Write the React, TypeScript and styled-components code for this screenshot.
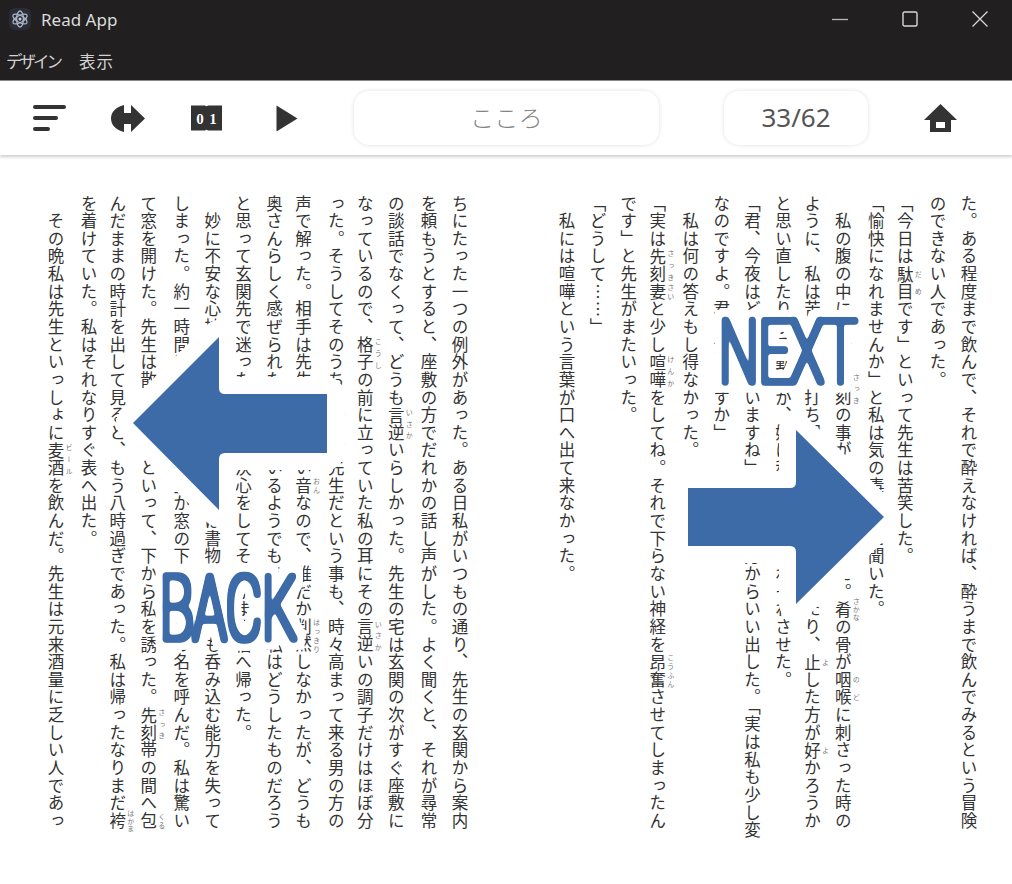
import React from "react";
import styled, { createGlobalStyle } from "styled-components";

const Global = createGlobalStyle`
  html, body { margin: 0; padding: 0; background: #fff; }
  body { font-family: "Noto Sans", "Noto Sans CJK JP", sans-serif; overflow: hidden; }
`;

const Shell = styled.div`
  position: relative;
  width: 1012px;
  height: 884px;
  overflow: hidden;
  background: #fff;
`;
const TitleBar = styled.header`
  height: 40px;
  background: #211f1f;
  display: flex;
  align-items: center;
  justify-content: space-between;
  padding: 0 24px 2px 9px;
  box-sizing: border-box;
`;
const Brand = styled.div`
  display: flex;
  align-items: center;
  gap: 10px;
  color: #dcdcdc;
  font: 400 17px "Noto Sans", sans-serif;
`;
const WindowControls = styled.div`
  display: flex;
  align-items: center;
  gap: 54px;
`;
const MenuBar = styled.nav`
  height: 41px;
  background: #211f1f;
  display: flex;
  align-items: center;
  gap: 19px;
  padding: 2px 0 0 6px;
  box-sizing: border-box;
  border-bottom: 1px solid #8a8a8a;
  color: #d2d2d2;
  font: 400 16.5px "Noto Sans CJK JP", sans-serif;
`;
const MenuItem = styled.span<{ $tracking: number }>`
  letter-spacing: ${(p) => p.$tracking}px;
`;
const Toolbar = styled.div`
  height: 74px;
  background: #fff;
  display: flex;
  align-items: center;
  padding-left: 10px;
  box-sizing: border-box;
  box-shadow: 0 2px 3px rgba(0, 0, 0, 0.2);
  position: relative;
`;
const ToolSlot = styled.div`
  width: 78.5px;
  height: 40px;
  display: flex;
  align-items: center;
  justify-content: center;
  flex: none;
`;
const Pill = styled.div<{ $w: number; $ml: number }>`
  width: ${(p) => p.$w}px;
  margin-left: ${(p) => p.$ml}px;
  height: 54px;
  flex: none;
  border-radius: 15px;
  background: #fff;
  box-shadow: 0 0 4px rgba(0, 0, 0, 0.13);
  display: flex;
  align-items: center;
  justify-content: center;
`;
const BookTitle = styled.span`
  color: #858585;
  font: 300 24px "Noto Sans CJK JP", sans-serif;
  letter-spacing: 0.4px;
  margin-top: -3px;
`;
const PageCount = styled.span`
  color: #555;
  font: 400 26px "Noto Sans", sans-serif;
  margin-top: -2px;
`;
const HomeSlot = styled(ToolSlot)`
  margin-left: 33px;
`;
const Reader = styled.main`
  display: flex;
  padding: 40px 0 0 42px;
  gap: 76px;
`;
const Page = styled.section`
  width: 433px;
  height: 660px;
  display: flex;
  flex-direction: row-reverse;
  justify-content: flex-start;
`;
const Column = styled.p`
  margin: 0;
  flex: none;
  width: 30.93px;
  height: 660px;
  writing-mode: vertical-rl;
  white-space: nowrap;
  font: 400 16.5px/31px "Noto Sans CJK JP", sans-serif;
  letter-spacing: 1.14px;
  color: #333;
  ruby-position: over;
  rt {
    font-size: 7px;
    letter-spacing: 0.6px;
    color: #777;
    line-height: 1;
  }
`;
const Overlay = styled.svg`
  position: absolute;
  left: 0;
  top: 0;
  pointer-events: none;
`;

const rightPage = [
  "た。ある程度まで飲んで、それで酔えなければ、酔うまで飲んでみるという冒険",
  "のできない人であった。",
  "「今日は{駄目|だめ}です」といって先生は苦笑した。",
  "「愉快になれませんか」と私は気の毒そうに聞いた。",
  "　私の腹の中には始終{先刻|さっき}の事が引ッ{懸|かか}っていた。{肴|さかな}の骨が{咽喉|のど}に刺さった時の",
  "ように、私は苦しんだ。打ち明けてみようかと考えたり、{止|よ}した方が{好|よ}かろうか",
  "と思い直したりする動揺が、妙に私の様子をそわそわさせた。",
  "「君、今夜はどうかしていますね」と先生の方からいい出した。「実は私も少し変",
  "なのですよ。君に分りますか」",
  "　私は何の答えもし得なかった。",
  "「実は{先刻|さっき}{妻|さい}と少し{喧嘩|けんか}をしてね。それで下らない神経を{昂奮|こうふん}させてしまったん",
  "です」と先生がまたいった。",
  "「どうして……」",
  "　私には喧嘩という言葉が口へ出て来なかった。",
];
const leftPage = [
  "ちにたった一つの例外があった。ある日私がいつもの通り、先生の玄関から案内",
  "を頼もうとすると、座敷の方でだれかの話し声がした。よく聞くと、それが尋常",
  "の談話でなくって、どうも{言逆|いさか}いらしかった。先生の宅は玄関の次がすぐ座敷に",
  "なっているので、{格子|こうし}の前に立っていた私の耳にその{言逆|いさか}いの調子だけはほぼ分",
  "った。そうしてそのうちの一人が先生だという事も、時々高まって来る男の方の",
  "声で解った。相手は先生よりも低い{音|おん}なので、誰だか{判然|はっきり}しなかったが、どうも",
  "奥さんらしく感ぜられた。泣いているようでもあった。私はどうしたものだろう",
  "と思って玄関先で迷ったが、すぐ決心をしてそのまま下宿へ帰った。",
  "　妙に不安な心持が私を襲って来た。私は書物を読んでも呑み込む能力を失って",
  "しまった。約一時間ばかりすると先生が窓の下へ来て私の名を呼んだ。私は驚い",
  "て窓を開けた。先生は散歩しようといって、下から私を誘った。{先刻|さっき}帯の間へ{包|くる}",
  "んだままの時計を出して見ると、もう八時過ぎであった。私は帰ったなりまだ{袴|はかま}",
  "を着けていた。私はそれなりすぐ表へ出た。",
  "　その晩私は先生といっしょに{麦酒|ビール}を飲んだ。先生は元来酒量に乏しい人であっ",
];

function renderLine(line: string) {
  return line.split(/(\{[^}]+\})/).map((part, i) => {
    if (part.startsWith("{")) {
      const [base, reading] = part.slice(1, -1).split("|");
      return (
        <ruby key={i}>
          {base}
          <rt>{reading}</rt>
        </ruby>
      );
    }
    return <React.Fragment key={i}>{part}</React.Fragment>;
  });
}

const ARROW = "#3c6ba8";

export default function App() {
  return (
    <Shell>
      <Global />
      <TitleBar>
        <Brand>
          <svg width="22" height="22" viewBox="0 0 22 22">
            <rect width="22" height="22" rx="6" fill="#2a2d38" />
            <g fill="none" stroke="#aab4c4" strokeWidth="1.3">
              <ellipse cx="11" cy="11" rx="8" ry="3.4" transform="rotate(30 11 11)" />
              <ellipse cx="11" cy="11" rx="8" ry="3.4" transform="rotate(90 11 11)" />
              <ellipse cx="11" cy="11" rx="8" ry="3.4" transform="rotate(150 11 11)" />
            </g>
            <circle cx="11" cy="11" r="1.5" fill="#c8d0dc" />
          </svg>
          Read App
        </Brand>
        <WindowControls>
          <svg width="16" height="16" viewBox="0 0 16 16">
            <path d="M0 8.5H16" stroke="#b8b8b8" strokeWidth="1.3" />
          </svg>
          <svg width="16" height="16" viewBox="0 0 16 16">
            <rect x="1" y="1" width="14" height="14" rx="1.5" fill="none" stroke="#d8d8d8" strokeWidth="1.4" />
          </svg>
          <svg width="16" height="16" viewBox="0 0 16 16">
            <path d="M0.5 0.5L15.5 15.5M15.5 0.5L0.5 15.5" stroke="#d8d8d8" strokeWidth="1.3" />
          </svg>
        </WindowControls>
      </TitleBar>
      <MenuBar>
        <MenuItem $tracking={-3}>デザイン</MenuItem>
        <MenuItem $tracking={1}>表示</MenuItem>
      </MenuBar>
      <Toolbar>
        <ToolSlot>
          <svg width="33" height="28" viewBox="0 0 33 28">
            <path
              d="M2 3H31M2 14H23M2 25H15"
              stroke="#333"
              strokeWidth="4"
              strokeLinecap="round"
              fill="none"
            />
          </svg>
        </ToolSlot>
        <ToolSlot>
          <svg width="34" height="27" viewBox="0 0 34 27">
            <path
              d="M13 0C4 2 0 8 0 13.5C0 19 4 25 13 27V19H20V27L34 13.5L20 0V8H13Z"
              fill="#333"
            />
          </svg>
        </ToolSlot>
        <ToolSlot>
          <svg width="31" height="26" viewBox="0 0 31 26">
            <path d="M0 0.5H14Q15.5 2 17 0.5H31V25.5H17Q15.5 24 14 25.5H0Z" fill="#333" />
            <text x="9" y="18.5" textAnchor="middle" fontFamily="Liberation Serif" fontWeight="700" fontSize="15" fill="#fff">
              0
            </text>
            <text x="22" y="18.5" textAnchor="middle" fontFamily="Liberation Serif" fontWeight="700" fontSize="15" fill="#fff">
              1
            </text>
          </svg>
        </ToolSlot>
        <ToolSlot>
          <svg width="26" height="27" viewBox="0 0 26 27">
            <path d="M4.5 0.5L25.5 13.5L4.5 26.5Z" fill="#333" />
          </svg>
        </ToolSlot>
        <Pill $w={305} $ml={30}>
          <BookTitle>こころ</BookTitle>
        </Pill>
        <Pill $w={144} $ml={65}>
          <PageCount>33/62</PageCount>
        </Pill>
        <HomeSlot>
          <svg width="33" height="28" viewBox="0 0 33 28">
            <path
              fillRule="evenodd"
              d="M16.5 0L33 16H27V28H6V16H0ZM12 18H21V24H12Z"
              fill="#333"
            />
          </svg>
        </HomeSlot>
      </Toolbar>
      <Reader>
        <Page>
          {leftPage.map((l, i) => (
            <Column key={i}>{renderLine(l)}</Column>
          ))}
        </Page>
        <Page>
          {rightPage.map((l, i) => (
            <Column key={i}>{renderLine(l)}</Column>
          ))}
        </Page>
      </Reader>
      <Overlay width="1012" height="884" viewBox="0 0 1012 884">
        <defs>
          <filter
            id="lettering"
            filterUnits="userSpaceOnUse"
            x="0"
            y="0"
            width="1012"
            height="884"
            colorInterpolationFilters="sRGB"
          >
            <feMorphology in="SourceAlpha" operator="dilate" radius="1.5" result="thick" />
            <feGaussianBlur in="thick" stdDeviation="1.6" result="soft" />
            <feComponentTransfer in="soft" result="pen">
              <feFuncA type="linear" slope="5" intercept="-1" />
            </feComponentTransfer>
            <feMorphology in="pen" operator="dilate" radius="7" result="grown" />
            <feFlood floodColor="#fff" />
            <feComposite in2="grown" operator="in" result="white" />
            <feFlood floodColor={ARROW} />
            <feComposite in2="pen" operator="in" result="ink" />
            <feMerge>
              <feMergeNode in="white" />
              <feMergeNode in="ink" />
            </feMerge>
          </filter>
        </defs>
        <path
          d="M327 394H225Q219 394 219 388V337L133 423L219 510V459Q219 453 225 453H327Z"
          fill={ARROW}
          stroke="#fff"
          strokeWidth="34"
          strokeLinejoin="round"
          paintOrder="stroke"
        />
        <path
          d="M688 488H790Q796 488 796 482V430L884 517L796 604V552Q796 546 790 546H688Z"
          fill={ARROW}
          stroke="#fff"
          strokeWidth="34"
          strokeLinejoin="round"
          paintOrder="stroke"
        />
        <g filter="url(#lettering)">
          <text
            x="719"
            y="383"
            fontFamily="Roboto"
            fontWeight="100"
            fontSize="89"
            textLength="138"
            lengthAdjust="spacingAndGlyphs"
            fill={ARROW}
          >
            NEXT
          </text>
        </g>
        <g filter="url(#lettering)">
          <text
            x="160"
            y="640"
            fontFamily="Roboto"
            fontWeight="100"
            fontSize="91"
            textLength="137"
            lengthAdjust="spacingAndGlyphs"
            fill={ARROW}
          >
            BACK
          </text>
        </g>
      </Overlay>
    </Shell>
  );
}
